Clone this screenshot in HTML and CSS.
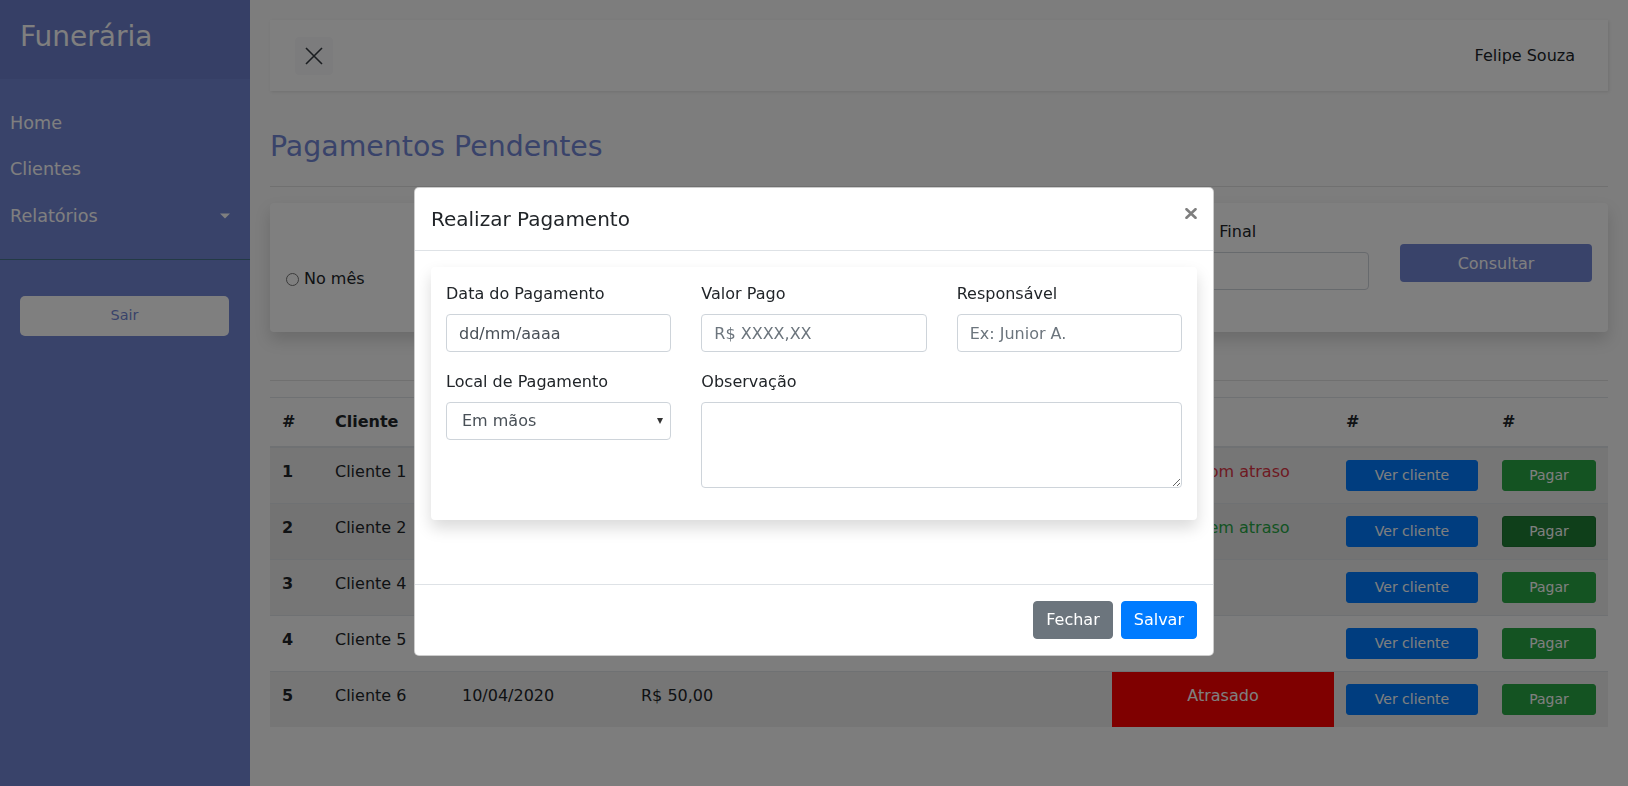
FILE: index.html
```html
<!DOCTYPE html>
<html lang="pt-BR">
<head>
<meta charset="utf-8">
<title>Funerária - Pagamentos Pendentes</title>
<link rel="stylesheet" href="styles.css">
</head>
<body>
<div class="wrapper">
  <nav class="sidebar">
    <div class="sidebar-header"><h3>Funerária</h3></div>
    <ul class="components">
      <li><a href="#">Home</a></li>
      <li><a href="#">Clientes</a></li>
      <li><a href="#" class="dropdown-toggle">Relatórios</a></li>
    </ul>
    <ul class="ctas">
      <li><a href="#" class="sair">Sair</a></li>
    </ul>
  </nav>

  <div class="content">
    <nav class="topbar">
      <button class="toggle" type="button" aria-label="Fechar menu">
        <svg width="18" height="18" viewBox="0 0 18 18"><path d="M1 1 L17 17 M17 1 L1 17" stroke="#343a40" stroke-width="1.6" fill="none"/></svg>
      </button>
      <span class="user">Felipe Souza</span>
    </nav>

    <h3 class="page-title">Pagamentos Pendentes</h3>
    <hr class="rule">

    <div class="filter-card">
      <div class="radios">
        <label class="radio"><input type="radio" name="periodo"> No mês</label>
      </div>
      <div class="field">
        <label class="lbl">Data Inicial</label>
        <input class="form-control" type="text">
      </div>
      <div class="field">
        <label class="lbl">Data Final</label>
        <input class="form-control" type="text">
      </div>
      <div class="btn-col">
        <button class="btn-consultar" type="button">Consultar</button>
      </div>
    </div>

    <hr class="sep">

    <table class="table">
      <colgroup>
        <col class="c-num"><col class="c-cli"><col class="c-data"><col class="c-valor"><col class="c-local"><col class="c-sit"><col class="c-ver"><col class="c-pagar">
      </colgroup>
      <thead>
        <tr><th>#</th><th>Cliente</th><th>Vencimento</th><th>Valor</th><th>Local</th><th>Situação</th><th>#</th><th>#</th></tr>
      </thead>
      <tbody>
        <tr class="odd">
          <th>1</th><td>Cliente 1</td><td>10/01/2020</td><td>R$ 50,00</td><td></td>
          <td class="center txt-danger">Pago com atraso</td>
          <td><button class="btn-sm btn-blue" type="button">Ver cliente</button></td>
          <td><button class="btn-sm btn-green" type="button">Pagar</button></td>
        </tr>
        <tr class="hover">
          <th>2</th><td>Cliente 2</td><td>10/02/2020</td><td>R$ 50,00</td><td></td>
          <td class="center txt-success">Pago sem atraso</td>
          <td><button class="btn-sm btn-blue" type="button">Ver cliente</button></td>
          <td><button class="btn-sm btn-green active" type="button">Pagar</button></td>
        </tr>
        <tr class="odd">
          <th>3</th><td>Cliente 4</td><td>10/03/2020</td><td>R$ 50,00</td><td></td>
          <td class="center"></td>
          <td><button class="btn-sm btn-blue" type="button">Ver cliente</button></td>
          <td><button class="btn-sm btn-green" type="button">Pagar</button></td>
        </tr>
        <tr>
          <th>4</th><td>Cliente 5</td><td>10/03/2020</td><td>R$ 50,00</td><td></td>
          <td class="center"></td>
          <td><button class="btn-sm btn-blue" type="button">Ver cliente</button></td>
          <td><button class="btn-sm btn-green" type="button">Pagar</button></td>
        </tr>
        <tr class="odd">
          <th>5</th><td>Cliente 6</td><td>10/04/2020</td><td>R$ 50,00</td><td></td>
          <td class="center atrasado">Atrasado</td>
          <td><button class="btn-sm btn-blue" type="button">Ver cliente</button></td>
          <td><button class="btn-sm btn-green" type="button">Pagar</button></td>
        </tr>
      </tbody>
    </table>
  </div>
</div>

<div class="backdrop"></div>

<div class="modal">
  <div class="modal-dialog">
    <div class="modal-content">
      <div class="modal-header">
        <h5 class="modal-title">Realizar Pagamento</h5>
        <button class="close" type="button" aria-label="Fechar">
          <svg width="12" height="11" viewBox="0 0 12 11"><path d="M1.5 1.2 L10.5 9.8 M10.5 1.2 L1.5 9.8" stroke="#000" stroke-width="2.6" stroke-linecap="round" fill="none"/></svg>
        </button>
      </div>
      <div class="modal-body">
        <div class="inner-card">
          <div class="form-grid">
            <div class="form-group first">
              <label class="lbl">Data do Pagamento</label>
              <input class="form-control date" type="text" value="dd/mm/aaaa">
            </div>
            <div class="form-group first">
              <label class="lbl">Valor Pago</label>
              <input class="form-control" type="text" placeholder="R$ XXXX,XX">
            </div>
            <div class="form-group first">
              <label class="lbl">Responsável</label>
              <input class="form-control" type="text" placeholder="Ex: Junior A.">
            </div>
            <div class="form-group">
              <label class="lbl">Local de Pagamento</label>
              <div class="select-wrap">
                <select class="form-control select">
                  <option>Em mãos</option>
                  <option>Boleto</option>
                </select>
              </div>
            </div>
            <div class="form-group span2">
              <label class="lbl">Observação</label>
              <textarea class="form-control" rows="3"></textarea>
            </div>
          </div>
        </div>
      </div>
      <div class="modal-footer">
        <button class="btn btn-secondary" type="button">Fechar</button>
        <button class="btn btn-primary" type="button">Salvar</button>
      </div>
    </div>
  </div>
</div>
</body>
</html>
```

FILE: styles.css
```css
* { box-sizing: border-box; }

html, body { height: 100%; }

body {
  margin: 0;
  font-family: "DejaVu Sans", "Open Sans", sans-serif;
  font-size: 16px;
  line-height: 1.5;
  color: #212529;
  background: #fafafa;
  overflow: hidden;
}

a { color: inherit; text-decoration: none; }

.wrapper {
  display: flex;
  min-height: 100vh;
}

/* ---------- Sidebar ---------- */
.sidebar {
  flex: 0 0 250px;
  width: 250px;
  background: #7386D5;
  color: #fff;
}

.sidebar-header {
  height: 79px;
  padding: 20px 20px 0;
  background: #6d7fcc;
}

.sidebar-header h3 {
  margin: 0;
  font-size: 28px;
  font-weight: 500;
  line-height: 1.2;
}

.components {
  list-style: none;
  margin: 0;
  padding: 21px 0 20px;
  border-bottom: 1px solid #47748b;
}

.components a {
  display: block;
  position: relative;
  padding: 10px;
  font-size: 17.6px;
  line-height: 26.4px;
}

.dropdown-toggle::after {
  content: "";
  position: absolute;
  right: 20px;
  top: 50%;
  transform: translateY(-50%);
  border-top: 5px solid #fff;
  border-left: 5px solid transparent;
  border-right: 5px solid transparent;
}

.ctas {
  list-style: none;
  margin: 0;
  padding: 36px 21px 20px 20px;
}

.sair {
  display: block;
  background: #fff;
  color: #7386D5;
  text-align: center;
  font-size: 14.4px;
  line-height: 21.6px;
  padding: 9px 10px;
  border-radius: 5px;
}

/* ---------- Content ---------- */
.content {
  flex: 1;
  padding: 20px;
}

.topbar {
  display: flex;
  align-items: center;
  justify-content: space-between;
  background: #fff;
  padding: 17px 25px 16px;
  margin-bottom: 39px;
  box-shadow: 1px 1px 3px rgba(0, 0, 0, 0.1);
}

.toggle {
  width: 38px;
  height: 38px;
  padding: 0;
  display: flex;
  align-items: center;
  justify-content: center;
  background: #f8f9fa;
  border: 1px solid #f8f9fa;
  border-radius: 4px;
}

.user {
  padding-right: 8px;
  color: #212529;
}

.page-title {
  margin: 0 0 8px;
  font-size: 28.4px;
  font-weight: 500;
  line-height: 1.2;
  color: #7386D5;
}

.rule {
  margin: 22px 0 16px;
  border: 0;
  border-top: 1px solid rgba(0, 0, 0, 0.1);
}

.filter-card {
  display: flex;
  align-items: flex-start;
  gap: 31px;
  height: 129px;
  padding: 17px 16px 16px;
  background: #fff;
  border-radius: 4px;
  box-shadow: 0 8px 16px rgba(0, 0, 0, 0.15);
}

.radios {
  flex: 1;
  display: flex;
  margin-top: 47px;
}

.radio {
  display: flex;
  align-items: center;
  line-height: 24px;
}

.radio input {
  margin: 0 5px 0 0;
  width: 13px;
  height: 13px;
}

.field { width: 193px; }

.lbl {
  display: block;
  margin-bottom: 8px;
  line-height: 24px;
}

.btn-col { width: 192px; padding-top: 24px; }

.btn-consultar {
  width: 100%;
  height: 38px;
  border: 0;
  border-radius: 4px;
  background: #7386D5;
  color: #fff;
  font-family: inherit;
  font-size: 16px;
}

.sep {
  margin: 48px 0 16px;
  border: 0;
  border-top: 1px solid rgba(0, 0, 0, 0.1);
}

/* ---------- Table ---------- */
.table {
  width: 100%;
  border-collapse: collapse;
  table-layout: fixed;
}

.c-num { width: 53px; }
.c-cli { width: 127px; }
.c-data { width: 179px; }
.c-valor { width: 241px; }
.c-local { width: 242px; }
.c-sit { width: 222px; }
.c-ver { width: 156px; }
.c-pagar { width: 118px; }

.table th,
.table td {
  padding: 12px;
  vertical-align: top;
  text-align: left;
  line-height: 24px;
  border-top: 1px solid #dee2e6;
  white-space: nowrap;
  overflow: hidden;
}

.table thead th {
  border-bottom: 2px solid #dee2e6;
  font-weight: 700;
}

.table tbody th { font-weight: 700; }

.table .center { text-align: center; }

.table tbody tr.odd { background: rgba(0, 0, 0, 0.05); }
.table tbody tr.hover { background: rgba(0, 0, 0, 0.075); }

.txt-danger { color: #dc3545; }
.txt-success { color: #28a745; }

.table td.atrasado {
  background: #ff0000;
  color: #fff;
}

.btn-sm {
  display: block;
  width: 100%;
  height: 31px;
  padding: 4px 8px;
  border: 1px solid transparent;
  border-radius: 3px;
  font-family: inherit;
  font-size: 14px;
  line-height: 21px;
  color: #fff;
}

.btn-blue { background: #007bff; border-color: #007bff; }
.btn-green { background: #28a745; border-color: #28a745; }
.btn-green.active { background: #1e7e34; border-color: #1c7430; }

/* ---------- Modal ---------- */
.backdrop {
  position: fixed;
  inset: 0;
  background: rgba(0, 0, 0, 0.5);
}

.modal {
  position: fixed;
  inset: 0;
}

.modal-dialog {
  width: 800px;
  margin: 187px auto 0;
}

.modal-content {
  background: #fff;
  border: 1px solid rgba(0, 0, 0, 0.2);
  border-radius: 5px;
}

.modal-header {
  display: flex;
  align-items: flex-start;
  padding: 16px;
  border-bottom: 1px solid #dee2e6;
}

.modal-title {
  margin: 0;
  font-size: 20px;
  font-weight: 500;
  line-height: 30px;
}

.close {
  margin: -16px -16px -16px auto;
  padding: 20px 16px 16px;
  background: none;
  border: 0;
  opacity: 0.5;
  line-height: 1;
}

.modal-body { padding: 16px; }

.inner-card {
  background: #fff;
  border-radius: 4px;
  padding: 15px 15px 16px;
  margin-bottom: 48px;
  box-shadow: 0 8px 16px rgba(0, 0, 0, 0.15);
}

.form-grid {
  display: grid;
  grid-template-columns: repeat(3, 1fr);
  column-gap: 30px;
}

.form-group { margin-bottom: 16px; }
.form-group.first { margin-bottom: 18px; }
.span2 { grid-column: span 2; }

.form-control {
  display: block;
  width: 100%;
  height: 38px;
  padding: 6px 12px;
  font-family: inherit;
  font-size: 16px;
  line-height: 1.5;
  color: #495057;
  background: #fff;
  border: 1px solid #ced4da;
  border-radius: 4px;
}

.form-control::placeholder { color: #6c757d; }

.select-wrap { position: relative; }

.select {
  -webkit-appearance: none;
  appearance: none;
  padding-left: 15px;
}

.select-wrap::after {
  content: "";
  position: absolute;
  right: 8px;
  top: 50%;
  margin-top: -3px;
  border-top: 6px solid #333;
  border-left: 3.5px solid transparent;
  border-right: 3.5px solid transparent;
  pointer-events: none;
}

textarea.form-control { height: 86px; resize: vertical; }

.modal-footer {
  display: flex;
  justify-content: flex-end;
  align-items: center;
  padding: 12px;
  border-top: 1px solid #dee2e6;
}

.btn {
  margin: 4px;
  padding: 6px 12px;
  font-family: inherit;
  font-size: 16px;
  line-height: 24px;
  border: 1px solid transparent;
  border-radius: 4px;
  color: #fff;
}

.btn-secondary { background: #6c757d; border-color: #6c757d; }
.btn-primary { background: #007bff; border-color: #007bff; }
```
